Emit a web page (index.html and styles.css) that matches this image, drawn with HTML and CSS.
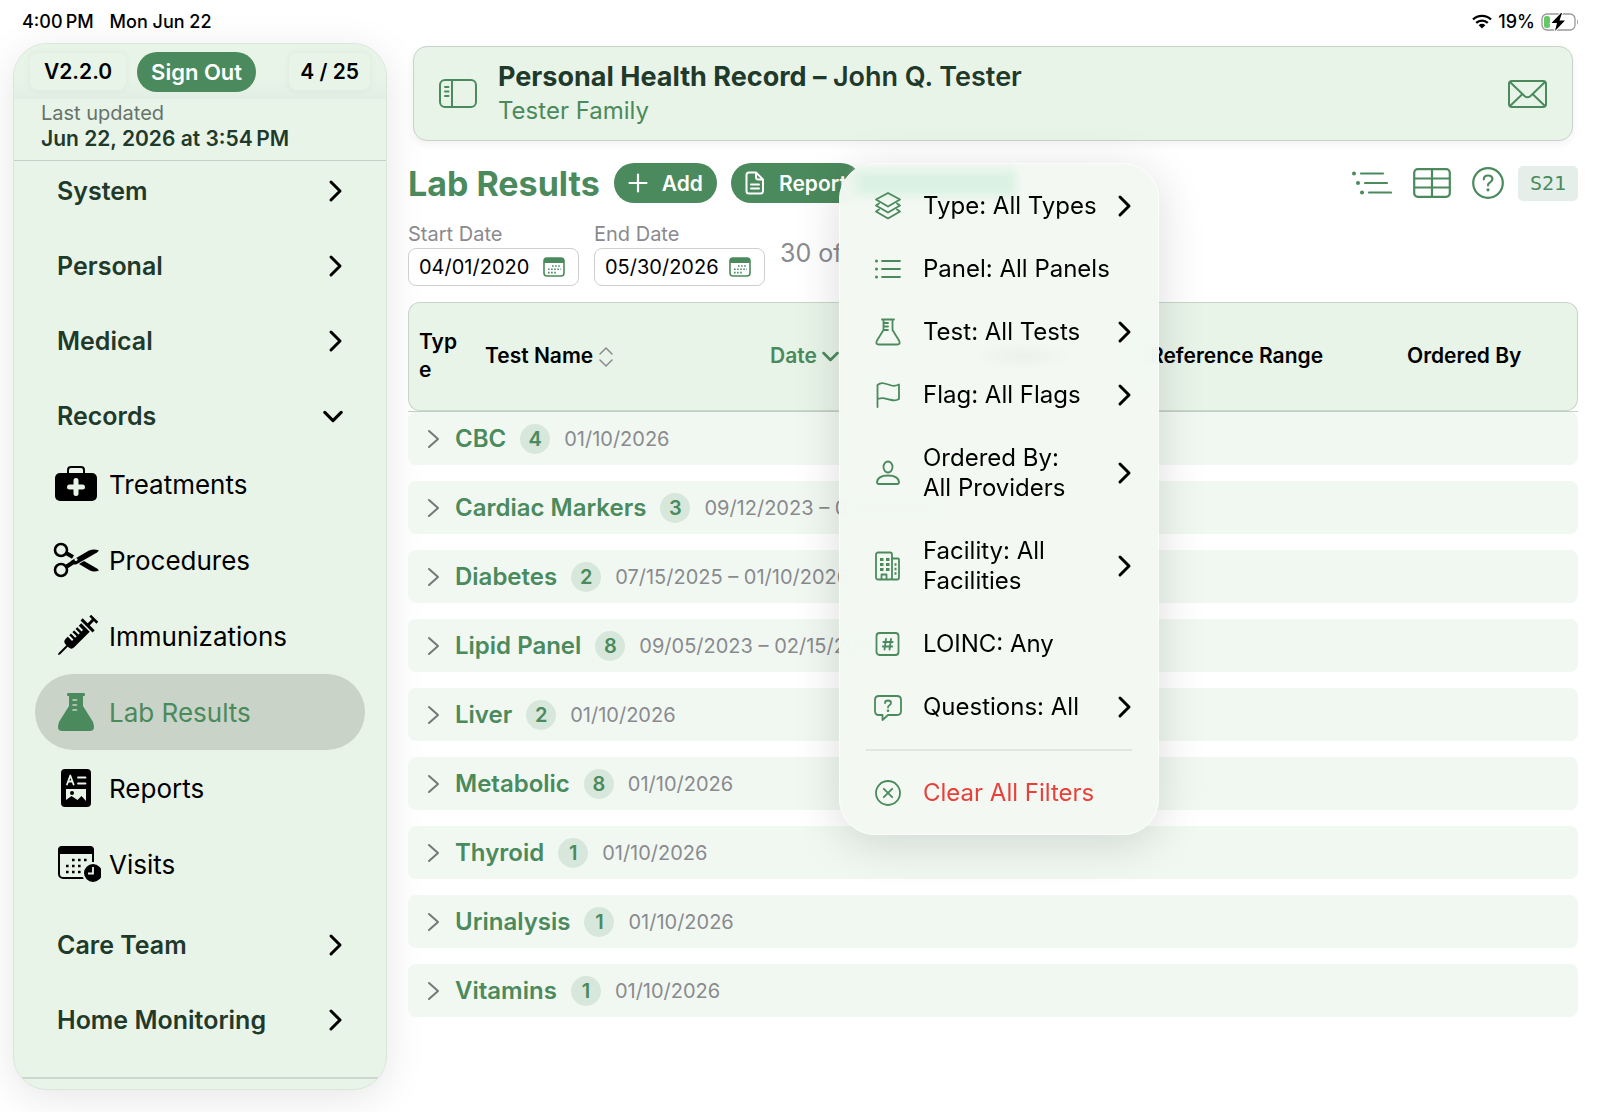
FILE: index.html
```html
<!DOCTYPE html>
<html lang="en">
<head>
  <meta charset="UTF-8">
  <meta name="viewport" content="width=device-width, initial-scale=1.0">
  <title>Personal Health Record - Lab Results</title>
  <link rel="stylesheet" href="styles.css">
</head>
<body>
  <svg class="defs" aria-hidden="true">
    <symbol id="chevron" viewBox="0 0 16 24"><path d="M4 3l9 9-9 9" fill="none" stroke="currentColor" stroke-width="3" stroke-linecap="round" stroke-linejoin="round"/></symbol>
    <symbol id="chevron-down" viewBox="0 0 22 14"><path d="M2 2.500l9 9 9-9" fill="none" stroke="currentColor" stroke-width="3.400" stroke-linecap="round" stroke-linejoin="round"/></symbol>
    <symbol id="chevron-thin" viewBox="0 0 14 24"><path d="M2 4l9 8-9 8" fill="none" stroke="currentColor" stroke-width="2" stroke-linecap="round" stroke-linejoin="round"/></symbol>
    <symbol id="calendar" viewBox="0 0 22 20">
      <rect x="1" y="1" width="20" height="18" rx="3" fill="none" stroke="currentColor" stroke-width="1.6"/>
      <path d="M1 6V3.500Q1 1 4 1h14q3 0 3 2.500V6z" fill="currentColor"/>
      <path d="M9 9h9M5 12.300h13M5 15.600h9" stroke="currentColor" stroke-width="1.600" stroke-dasharray="1.600 1.500"/>
    </symbol>
  </svg>

  <header class="status-bar">
    <span>4:00&#8239;PM</span>
    <span>Mon Jun 22</span>
    <div class="status-right">
      <svg width="20" height="15" viewBox="0 0 20 15">
        <g fill="none" stroke="#000" stroke-width="2.400">
          <path d="M1 5.500a13 13 0 0 1 18 0"/>
          <path d="M4.200 8.900a8.500 8.500 0 0 1 11.600 0"/>
        </g>
        <path d="M10 14.500l-3.300-3.300a4.700 4.700 0 0 1 6.600 0z"/>
      </svg>
      <span>19%</span>
      <svg width="38" height="18" viewBox="0 0 38 18">
        <rect x="1" y="1" width="33" height="16" rx="5" fill="none" stroke="#999" stroke-width="1.300"/>
        <path d="M36 6q2 3 0 6z" fill="#999"/>
        <rect x="3" y="3" width="6" height="12" rx="2.500" fill="#62c966"/>
        <path d="M20 0l-9.500 10h5.500l-2 8 10-10.500h-5.500l2.500-7.500z" fill="#000" stroke="#fff" stroke-width="2" paint-order="stroke"/>
      </svg>
    </div>
  </header>

  <div class="app">
    <aside class="sidebar">
      <div class="sidebar-top">
        <span class="chip">V2.2.0</span>
        <button type="button" class="btn">Sign Out</button>
        <span class="chip chip-right">4 / 25</span>
      </div>
      <div class="updated">
        <span>Last updated</span>
        <strong>Jun 22, 2026 at 3:54&#8239;PM</strong>
      </div>
      <nav class="nav">
        <button type="button" class="group">System <svg width="16" height="24"><use href="#chevron"/></svg></button>
        <button type="button" class="group">Personal <svg width="16" height="24"><use href="#chevron"/></svg></button>
        <button type="button" class="group">Medical <svg width="16" height="24"><use href="#chevron"/></svg></button>
        <button type="button" class="group group-open">Records <svg width="20" height="13"><use href="#chevron-down"/></svg></button>
        <ul class="items">
          <li><a href="#treatments">
            <svg width="48" height="42" viewBox="0 0 48 42">
              <path d="M15 12V7q0-3 3-3h10q3 0 3 3v5" fill="none" stroke="currentColor" stroke-width="2"/>
              <rect x="2" y="10" width="42" height="28" rx="5" fill="currentColor"/>
              <path d="M23 17.500v13M16.500 24h13" stroke="#e9f4e9" stroke-width="5" stroke-linecap="round"/>
            </svg>Treatments</a></li>
          <li><a href="#procedures">
            <svg width="48" height="42" viewBox="0 0 48 42">
              <g fill="none" stroke="currentColor" stroke-width="2.600">
                <circle cx="8" cy="11" r="6"/>
                <circle cx="8" cy="31" r="6"/>
                <path d="M13 14l7 4" stroke-width="4"/>
                <path d="M13 28l9-6" stroke-width="4"/>
              </g>
              <path d="M18 22L36 11.500q5-2 10 0L44 13.500 24 25q-4 2-6-3z" fill="currentColor"/>
              <path d="M26 25l5-3 13 7.500 2 2q-5 2-9 0z" fill="currentColor"/>
              <circle cx="23" cy="20.500" r="1.500" fill="#e9f4e9"/>
            </svg>Procedures</a></li>
          <li><a href="#immunizations">
            <svg width="48" height="42" viewBox="0 0 48 42">
              <g transform="rotate(45 24 21)" fill="currentColor">
                <path d="M18 9h12v22q0 4-4 4h-4q-4 0-4-4z"/>
                <path d="M15.500 4.500h17v3h-17zM19-4h10v2.500H19zM22.500-3h3v8h-3zM23 34h2v12l-1 2-1-2z"/>
                <path d="M17 13.500h7M17 18h7M17 22.500h7M17 27h7" stroke="#e9f4e9" stroke-width="2"/>
              </g>
            </svg>Immunizations</a></li>
          <li><a href="#lab-results" class="active" aria-current="page">
            <svg width="48" height="42" viewBox="0 0 48 42">
              <path d="M15 2h16q1 0 1 1.500T31 5h-1v10l10 16q3 9-3 9H9q-6 0-3-9l10-16V5h-1q-1 0-1-1.500T15 2z" fill="currentColor"/>
              <path d="M20 9h3.500M20 14h3.500M20 19h3.500" stroke="#c9d3c8" stroke-width="1.600" stroke-linecap="round"/>
            </svg>Lab Results</a></li>
          <li><a href="#reports">
            <svg width="48" height="42" viewBox="0 0 48 42">
              <rect x="8" y="2" width="30" height="38" rx="4" fill="currentColor"/>
              <g fill="none" stroke="#e9f4e9" stroke-width="1.800" stroke-linecap="round" stroke-linejoin="round">
                <path d="M14 17.500l3.300-9 3.300 9M15.200 14.500h4.200M25 10.500h7.500M25 16.500h7.500"/>
              </g>
              <path d="M13 22h20v12l-4.500-5-4 4-6-4-5.500 4z" fill="#e9f4e9"/>
              <circle cx="19" cy="26" r="2" fill="currentColor"/>
            </svg>Reports</a></li>
          <li><a href="#visits">
            <svg width="48" height="42" viewBox="0 0 48 42">
              <rect x="6" y="4" width="34" height="31" rx="4" fill="none" stroke="currentColor" stroke-width="2"/>
              <path d="M5 11V7q0-4 4-4h28q4 0 4 4v4z" fill="currentColor"/>
              <path d="M19 17h16M13 23h16M13 29h16" stroke="currentColor" stroke-width="2.600" stroke-dasharray="2.600 3.400"/>
              <circle cx="40" cy="30" r="10" fill="currentColor" stroke="#e9f4e9" stroke-width="2"/>
              <path d="M40 24v6.500h-5" fill="none" stroke="#e9f4e9" stroke-width="1.800"/>
            </svg>Visits</a></li>
        </ul>
        <button type="button" class="group">Care Team <svg width="16" height="24"><use href="#chevron"/></svg></button>
        <button type="button" class="group">Home Monitoring <svg width="16" height="24"><use href="#chevron"/></svg></button>
      </nav>
      <div class="sidebar-end"></div>
    </aside>

    <main class="content">
      <section class="patient">
        <button type="button" class="icon-btn" aria-label="Toggle sidebar">
          <svg width="38" height="30" viewBox="0 0 38 30" fill="none" stroke="currentColor" stroke-width="2" stroke-linecap="round">
            <rect x="1" y="1" width="36" height="27" rx="5"/>
            <path d="M13 1v27M6 8h3.500M6 12.500h3.500M6 17h3.500"/>
          </svg>
        </button>
        <div class="patient-text">
          <h2>Personal Health Record – <span>John Q. Tester</span></h2>
          <p>Tester Family</p>
        </div>
        <button type="button" class="icon-btn" aria-label="Messages">
          <svg width="39" height="28" viewBox="0 0 39 28" fill="none" stroke="currentColor" stroke-width="2" stroke-linejoin="round">
            <rect x="1" y="1" width="37" height="26" rx="3"/>
            <path d="M2 2l14.500 14q3 2.500 6 0L37 2M2 26l12.500-12M37 26L24.500 14"/>
          </svg>
        </button>
      </section>

      <div class="toolbar">
        <h1>Lab Results</h1>
        <button type="button" class="btn">
          <svg width="20" height="20" viewBox="0 0 20 20"><path d="M10 1.500v17M1.500 10h17" stroke="currentColor" stroke-width="2.200" stroke-linecap="round"/></svg>
          Add
        </button>
        <button type="button" class="btn">
          <svg width="20" height="24" viewBox="0 0 20 24" fill="none" stroke="currentColor" stroke-width="2" stroke-linejoin="round" stroke-linecap="round"><path d="M4 1.500h7l7 7V20q0 2.500-2.500 2.500H4Q1.500 22.500 1.500 20V4Q1.500 1.500 4 1.500zM11 1.500V6q0 2.500 2.500 2.500H18M6 13.500h8M6 17.500h8"/></svg>
          Report
        </button>
        <div class="toolbar-right">
          <button type="button" class="icon-btn" aria-label="Grouped list">
            <svg width="40" height="24" viewBox="0 0 40 24" stroke="currentColor" stroke-width="2.200" stroke-linecap="round"><path d="M9 2.500h22M13 12h22M17 21.500h22"/><path d="M2 2.500h.01M6 12h.01M10 21.500h.01" stroke-width="4"/></svg>
          </button>
          <button type="button" class="icon-btn" aria-label="Table view">
            <svg width="38" height="30" viewBox="0 0 38 30" fill="none" stroke="currentColor" stroke-width="2.200"><rect x="1.200" y="1.200" width="35.600" height="27.600" rx="3.500"/><path d="M1 10.500h36M1 19.500h36M19 1v28"/></svg>
          </button>
          <button type="button" class="icon-btn" aria-label="Help">
            <svg width="32" height="32" viewBox="0 0 32 32" fill="none" stroke="currentColor" stroke-width="2.200" stroke-linecap="round"><circle cx="16" cy="16" r="14.800"/><path d="M11.800 12.300q0-3.800 4.300-3.800t4.300 3.600q0 2-2.300 3.300t-2.100 3"/><path d="M16 22.800h.01" stroke-width="3.200"/></svg>
          </button>
          <span class="screen-id">S21</span>
        </div>

        <div class="menu" role="menu">
          <button type="button" role="menuitem">
            <svg width="28" height="30" viewBox="0 0 28 30" class="lead"><path d="M14 2l12 6.500L14 15.500 2 8.500zM5 12.500L2 14.500l12 7 12-7-3-2M5 18.500L2 20.500l12 7 12-7-3-2"/></svg>
            <span>Type: All Types</span><svg class="more" width="16" height="24"><use href="#chevron"/></svg>
          </button>
          <button type="button" role="menuitem">
            <svg width="28" height="30" viewBox="0 0 28 30" class="lead"><path d="M8 7h18M8 15h18M8 23h18"/><path d="M2.500 7h.01M2.500 15h.01M2.500 23h.01" stroke-width="3"/></svg>
            <span>Panel: All Panels</span>
          </button>
          <button type="button" role="menuitem">
            <svg width="28" height="30" viewBox="0 0 28 30" class="lead"><path d="M8 2.500h12M9.500 3v10L3 23.500q-2 4 2 4h18q4 0 2-4L18.500 13V3M10 6h4M10 9.500h4M10 13h4"/></svg>
            <span>Test: All Tests</span><svg class="more" width="16" height="24"><use href="#chevron"/></svg>
          </button>
          <button type="button" role="menuitem">
            <svg width="28" height="30" viewBox="0 0 28 30" class="lead"><path d="M3.500 27V5q3-2.500 7-1.500t7 2 7.500-1V19q-3 2-7.500 1t-7-1.700-7 .7"/></svg>
            <span>Flag: All Flags</span><svg class="more" width="16" height="24"><use href="#chevron"/></svg>
          </button>
          <button type="button" role="menuitem">
            <svg width="28" height="30" viewBox="0 0 28 30" class="lead"><ellipse cx="14" cy="9" rx="4.500" ry="5.500"/><path d="M5 26q-2 0-2-2 1-6.500 11-6.500T25 24q0 2-2 2z"/></svg>
            <span>Ordered By:<br>All Providers</span><svg class="more" width="16" height="24"><use href="#chevron"/></svg>
          </button>
          <button type="button" role="menuitem">
            <svg width="28" height="30" viewBox="0 0 28 30" class="lead"><rect x="2" y="1.500" width="16" height="27" rx="2"/><path d="M18 7.500h6q1 0 1 1V27q0 1.500-1.500 1.500H18M7.500 28v-4.500h5V28"/><path d="M6 8.500h3.500M12 8.500h3.500M6 13.500h3.500M12 13.500h3.500M6 18.500h3.500M12 18.500h3.500" stroke-width="3.200" stroke-linecap="butt"/><path d="M20.500 13.500h2M20.500 18h2M20.500 22.500h2" stroke-width="2.400" stroke-linecap="butt"/></svg>
            <span>Facility: All<br>Facilities</span><svg class="more" width="16" height="24"><use href="#chevron"/></svg>
          </button>
          <button type="button" role="menuitem">
            <svg width="28" height="30" viewBox="0 0 28 30" class="lead"><rect x="2.500" y="4" width="22" height="22" rx="3"/><path d="M12 10l-1.500 10.500M17 10l-1.500 10.500M9.300 13h9.400M8.800 17.500h9.400"/></svg>
            <span>LOINC: Any</span>
          </button>
          <button type="button" role="menuitem">
            <svg width="28" height="30" viewBox="0 0 28 30" class="lead"><path d="M5 4h18q4 0 4 4v11q0 4-4 4H14l-5.500 5v-5H5q-4 0-4-4V8q0-4 4-4z"/><path d="M11 11q0-2.500 3-2.500t3 2.500q0 1.500-1.500 2.300T14 15.500"/><path d="M14 18.700h.01" stroke-width="2.600"/></svg>
            <span>Questions: All</span><svg class="more" width="16" height="24"><use href="#chevron"/></svg>
          </button>
          <hr>
          <button type="button" role="menuitem" class="danger">
            <svg width="28" height="30" viewBox="0 0 28 30" class="lead"><circle cx="14" cy="15" r="12"/><path d="M9.800 10.800l8.400 8.400M18.200 10.800l-8.400 8.400"/></svg>
            <span>Clear All Filters</span>
          </button>
        </div>
      </div>

      <div class="dates">
        <div class="field">
          <label for="start-date">Start Date</label>
          <div class="date-box">
            <input type="text" id="start-date" value="04/01/2020">
            <button type="button" class="icon-btn" aria-label="Pick start date"><svg width="22" height="20"><use href="#calendar"/></svg></button>
          </div>
        </div>
        <div class="field">
          <label for="end-date">End Date</label>
          <div class="date-box">
            <input type="text" id="end-date" value="05/30/2026">
            <button type="button" class="icon-btn" aria-label="Pick end date"><svg width="22" height="20"><use href="#calendar"/></svg></button>
          </div>
        </div>
        <span class="count">30 of 30</span>
      </div>

      <table class="results">
        <colgroup>
          <col class="c-type"><col class="c-name"><col class="c-date"><col class="c-value"><col class="c-range"><col>
        </colgroup>
        <thead>
          <tr>
            <th>Type</th>
            <th>Test Name <svg width="14" height="20" viewBox="0 0 14 20" fill="none" stroke="#8a8a8e" stroke-width="1.500" stroke-linecap="round" stroke-linejoin="round"><path d="M1 7l6-6 6 6M1 13l6 6 6-6"/></svg></th>
            <th class="sorted">Date <svg width="17" height="11"><use href="#chevron-down"/></svg></th>
            <th></th>
            <th>Reference Range</th>
            <th>Ordered By</th>
          </tr>
        </thead>
        <tbody>
          <tr><td colspan="6"><button type="button" class="panel"><svg width="14" height="24"><use href="#chevron-thin"/></svg><b>CBC</b><i>4</i><span>01/10/2026</span></button></td></tr>
          <tr><td colspan="6"><button type="button" class="panel"><svg width="14" height="24"><use href="#chevron-thin"/></svg><b>Cardiac Markers</b><i>3</i><span>09/12/2023 – 01/10/2026</span></button></td></tr>
          <tr><td colspan="6"><button type="button" class="panel"><svg width="14" height="24"><use href="#chevron-thin"/></svg><b>Diabetes</b><i>2</i><span>07/15/2025 – 01/10/2026</span></button></td></tr>
          <tr><td colspan="6"><button type="button" class="panel"><svg width="14" height="24"><use href="#chevron-thin"/></svg><b>Lipid Panel</b><i>8</i><span>09/05/2023 – 02/15/2026</span></button></td></tr>
          <tr><td colspan="6"><button type="button" class="panel"><svg width="14" height="24"><use href="#chevron-thin"/></svg><b>Liver</b><i>2</i><span>01/10/2026</span></button></td></tr>
          <tr><td colspan="6"><button type="button" class="panel"><svg width="14" height="24"><use href="#chevron-thin"/></svg><b>Metabolic</b><i>8</i><span>01/10/2026</span></button></td></tr>
          <tr><td colspan="6"><button type="button" class="panel"><svg width="14" height="24"><use href="#chevron-thin"/></svg><b>Thyroid</b><i>1</i><span>01/10/2026</span></button></td></tr>
          <tr><td colspan="6"><button type="button" class="panel"><svg width="14" height="24"><use href="#chevron-thin"/></svg><b>Urinalysis</b><i>1</i><span>01/10/2026</span></button></td></tr>
          <tr><td colspan="6"><button type="button" class="panel"><svg width="14" height="24"><use href="#chevron-thin"/></svg><b>Vitamins</b><i>1</i><span>01/10/2026</span></button></td></tr>
        </tbody>
      </table>
    </main>
  </div>
</body>
</html>
```

FILE: styles.css
```css
:root {
  --green: #4a8a5c;
  --dark: #1f3a2b;
  --mint: #e9f4e9;
  --gray: #8a8a8e;
}
* {
  box-sizing: border-box;
}
body {
  margin: 0;
  min-height: 100vh;
  display: flex;
  flex-direction: column;
  font-family: Inter, "Liberation Sans", sans-serif;
  background: #fff;
  color: #000;
}
button {
  font: inherit;
  color: inherit;
  background: none;
  border: none;
  padding: 0;
  cursor: pointer;
}
svg {
  flex: none;
}
.defs {
  position: absolute;
  width: 0;
  height: 0;
}

/* status bar */
.status-bar {
  display: flex;
  align-items: center;
  gap: 16px;
  height: 43px;
  padding: 0 21px 0 22px;
  font-size: 18px;
  font-weight: 500;
}
.status-right {
  display: flex;
  align-items: center;
  gap: 6px;
  margin-left: auto;
}

.app {
  display: flex;
  flex: 1;
  gap: 21px;
  padding: 0 22px 22px 13px;
}

/* sidebar */
.sidebar {
  display: flex;
  flex-direction: column;
  flex: none;
  width: 374px;
  background: var(--mint);
  border: 1px solid #dbe6dc;
  border-radius: 34px;
  box-shadow: 0 8px 40px rgba(0, 0, 0, 0.1);
  overflow: hidden;
}
.sidebar-top {
  display: flex;
  align-items: center;
  gap: 11px;
  height: 55px;
  padding: 0 16px;
  font-size: 21px;
  font-weight: 600;
  background: linear-gradient(var(--mint) 60%, #e2ede3);
}
.sidebar-top .btn {
  padding: 0 14px;
  font-size: 22px;
}
.chip {
  padding: 0 14px;
  line-height: 37px;
  border-radius: 8px;
  background: var(--mint);
  box-shadow: 0 0 8px rgba(0, 0, 0, 0.05);
}
.chip-right {
  margin-left: auto;
  padding: 0 11px;
}
.btn {
  display: flex;
  align-items: center;
  gap: 14px;
  height: 40px;
  padding: 0 14px;
  border-radius: 20px;
  background: var(--green);
  color: #fff;
  font-size: 21px;
  font-weight: 600;
  white-space: nowrap;
}
.updated {
  display: flex;
  flex-direction: column;
  height: 62px;
  padding: 1px 27px;
  border-bottom: 1px solid #c5d1c7;
  font-size: 20px;
  line-height: 26px;
  color: #66736a;
}
.updated strong {
  font-size: 21px;
  font-weight: 600;
  color: var(--dark);
}
.nav {
  display: flex;
  flex-direction: column;
  padding: 0 21px;
}
.group {
  display: flex;
  align-items: center;
  justify-content: space-between;
  height: 60px;
  margin-bottom: 15px;
  padding: 0 22px;
  font-size: 25px;
  font-weight: 600;
  color: var(--dark);
}
.group svg {
  color: #000;
}
.group-open {
  margin-bottom: 0;
}
.items {
  list-style: none;
  margin: 0 0 13px;
  padding: 0;
}
.items a {
  display: flex;
  align-items: center;
  gap: 8px;
  height: 76px;
  padding-left: 18px;
  border-radius: 38px;
  font-size: 26px;
  color: #000;
  text-decoration: none;
}
.items a.active {
  background: #c9d3c8;
  color: var(--green);
}
.sidebar-end {
  height: 12px;
  margin-top: auto;
  border-top: 2px solid #cbd6cc;
}

/* patient header */
.content {
  flex: 1;
  min-width: 0;
}
.patient {
  display: flex;
  align-items: center;
  gap: 21px;
  height: 95px;
  margin: 3px 5px 0;
  padding: 0 25px;
  background: var(--mint);
  border: 1px solid #c8d2ca;
  border-radius: 14px;
  box-shadow: 0 3px 8px rgba(0, 0, 0, 0.06);
}
.icon-btn {
  display: flex;
  color: var(--green);
}
.patient-text {
  flex: 1;
  line-height: 34px;
  color: var(--green);
}
.patient h2 {
  margin: 0;
  font-size: 27px;
  font-weight: 700;
  color: var(--dark);
}
.patient h2 span {
  font-weight: 600;
}
.patient p {
  margin: 0;
  font-size: 24px;
}

/* title row */
.toolbar {
  position: relative;
  display: flex;
  align-items: center;
  gap: 14px;
  height: 42px;
  margin-top: 21px;
}
.toolbar h1 {
  margin: 0;
  font-size: 34px;
  font-weight: 700;
  color: var(--green);
}
.toolbar-right {
  display: flex;
  align-items: center;
  gap: 21px;
  margin-left: auto;
}
.screen-id {
  margin-left: -7px;
  padding: 0 12px;
  border-radius: 5px;
  background: #e6eeea;
  color: var(--green);
  font-family: "DejaVu Sans Mono", monospace;
  font-size: 20px;
  line-height: 35px;
}

/* filter menu */
.menu {
  position: absolute;
  z-index: 2;
  top: 1px;
  left: 431px;
  width: 320px;
  padding: 10px 26px;
  border: 1px solid #fafdfa;
  border-radius: 36px;
  background:
    radial-gradient(50px 14px at 182px 192px, rgba(0, 0, 0, 0.03), transparent),
    rgba(242, 248, 243, 0.96);
  backdrop-filter: blur(12px);
  box-shadow: 0 8px 48px rgba(0, 0, 0, 0.14);
}
/* tint of the buttons showing through the glass */
.menu::before {
  content: "";
  position: absolute;
  z-index: -1;
  top: 6px;
  left: 16px;
  width: 160px;
  height: 26px;
  background: #dbf2e3;
  filter: blur(5px);
}
.menu button {
  display: flex;
  align-items: center;
  width: 100%;
  min-height: 63px;
  padding: 0 0 0 8px;
  font-size: 24px;
  line-height: 30px;
  text-align: left;
  white-space: nowrap;
}
.menu .lead {
  margin-right: 21px;
  fill: none;
  stroke: var(--green);
  stroke-width: 1.8;
  stroke-linecap: round;
  stroke-linejoin: round;
}
.menu button:has(br) {
  min-height: 93px;
}
.menu .more {
  margin-left: auto;
}
.menu hr {
  height: 2px;
  margin: 11px 0 10px;
  border: none;
  background: #e1e6e2;
}
.menu .danger {
  color: #e8403a;
}

/* date filters */
.dates {
  display: flex;
  gap: 15px;
  margin-top: 18px;
}
.field label {
  display: block;
  height: 26px;
  font-size: 20px;
  line-height: 24px;
  color: var(--gray);
}
.date-box {
  display: flex;
  align-items: center;
  gap: 6px;
  height: 38px;
  padding: 0 13px 0 10px;
  border: 1px solid #cfcfd2;
  border-radius: 8px;
  background: #fff;
}
.date-box input {
  width: 118px;
  padding: 0;
  border: none;
  outline: none;
  background: none;
  font: inherit;
  font-size: 20px;
}
.count {
  margin-top: 15px;
  font-size: 25px;
  line-height: 32px;
  color: var(--gray);
}

/* results table */
.results {
  width: 100%;
  margin-top: 16px;
  border-collapse: separate;
  border-spacing: 0;
  table-layout: fixed;
}
.c-type { width: 66px; }
.c-name { width: 285px; }
.c-date { width: 200px; }
.c-value { width: 180px; }
.c-range { width: 257px; }
.results th {
  height: 109px;
  padding: 0 11px 1px;
  background: var(--mint);
  border: 0 solid #c9d5ca;
  border-width: 1px 0;
  font-size: 21px;
  font-weight: 600;
  line-height: 28px;
  text-align: left;
  white-space: nowrap;
}
.results th:first-child {
  border-left-width: 1px;
  border-radius: 12px 0 0 12px;
  padding-left: 10px;
  white-space: normal;
  word-break: break-all;
}
.results th:last-child {
  border-right-width: 1px;
  border-radius: 0 12px 12px 0;
}
.results th svg {
  vertical-align: -4px;
}
.results .sorted {
  color: var(--green);
}
.results .sorted svg {
  vertical-align: 1px;
}
.results td {
  padding: 0 0 16px;
}
.results tbody tr:first-child td {
  border-top: 1px solid #c3cec5;
}
.panel {
  display: flex;
  align-items: center;
  gap: 14px;
  width: 100%;
  height: 53px;
  padding: 0 19px;
  border-radius: 8px;
  background: #f1f8f2;
}
.panel svg {
  color: #77777a;
}
.panel b {
  font-size: 24px;
  font-weight: 600;
  color: var(--green);
}
.panel i {
  width: 30px;
  border-radius: 15px;
  background: #d7e7db;
  color: var(--green);
  font-size: 20px;
  font-style: normal;
  font-weight: 600;
  line-height: 30px;
}
.panel span {
  font-size: 20px;
  color: var(--gray);
}
```
